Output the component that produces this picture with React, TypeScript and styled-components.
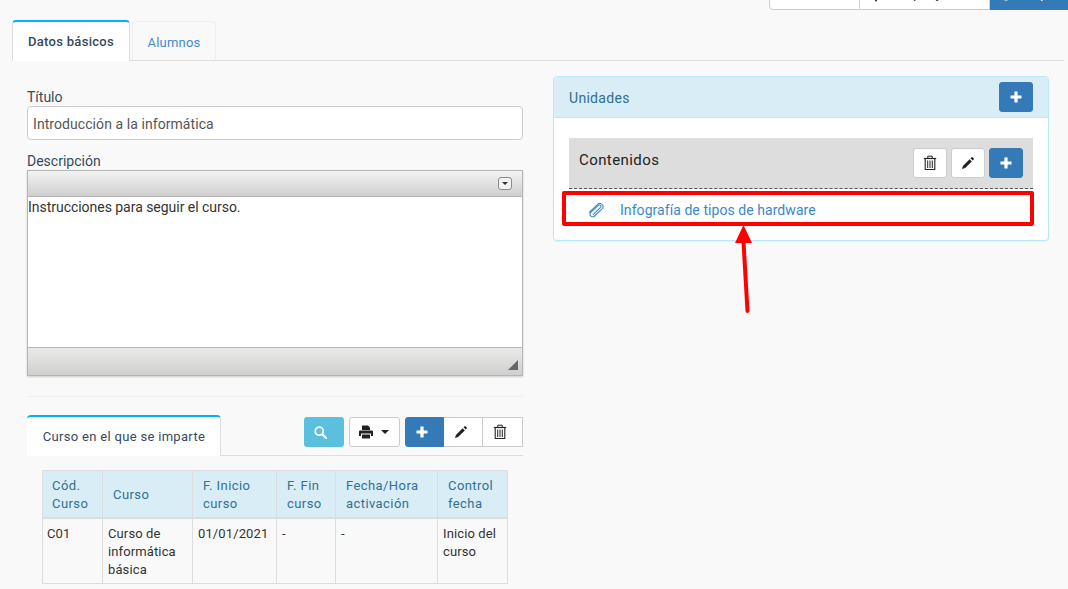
import React from "react";
import styled, { createGlobalStyle } from "styled-components";

const Global = createGlobalStyle`
  html, body { margin: 0; padding: 0; background: #f9f9f9; overflow: hidden; }
  body { font-family: Roboto, "Liberation Sans", sans-serif; font-size: 14px; line-height: 20px; color: #333; }
  * { box-sizing: border-box; }
`;

const Page = styled.div`
  position: relative;
  width: 1068px;
  height: 589px;
  overflow: hidden;
  background: #f9f9f9;
`;

const TopBar = styled.div`
  height: 10px;
  display: flex;
  justify-content: flex-end;
  align-items: flex-end;
  overflow: hidden;
`;

const TopGroup = styled.div`
  display: flex;
  width: 299px;
  height: 34px;
  flex: none;
`;

const TopButton = styled.div<{ $w: number; $primary?: boolean; $first?: boolean; $pad: number; $gap: number }>`
  width: ${(p) => p.$w}px;
  height: 34px;
  flex: none;
  display: flex;
  align-items: center;
  padding-left: ${(p) => p.$pad}px;
  gap: ${(p) => p.$gap}px;
  color: ${(p) => (p.$primary ? "#fff" : "#333")};
  background: ${(p) => (p.$primary ? "#337ab7" : "#fff")};
  border: 1px solid ${(p) => (p.$primary ? "#337ab7" : "#ccc")};
  border-left-width: ${(p) => (p.$first ? 1 : 0)}px;
  border-bottom-left-radius: ${(p) => (p.$first ? 4 : 0)}px;
  white-space: nowrap;
`;

const TopIcon = styled.span`
  display: flex;
  margin-top: 4px;
`;

const Tabs = styled.div`
  margin: 10px 4px 0 12px;
  height: 41px;
  display: flex;
  align-items: flex-end;
  gap: 2px;
  border-bottom: 1px solid #ddd;
`;

const ActiveTab = styled.div<{ $w: number }>`
  width: ${(p) => p.$w}px;
  height: 41px;
  margin-bottom: -1px;
  background: #fff;
  border: 1px solid #ddd;
  border-top: 2px solid #00b0ff;
  border-bottom: 0;
  border-radius: 4px 4px 0 0;
  display: flex;
  align-items: center;
  justify-content: center;
  font-size: 13px;
  font-weight: 500;
  letter-spacing: 0.3px;
  color: #34495e;
  white-space: nowrap;
`;

const InactiveTab = styled.div`
  width: 84px;
  height: 39px;
  border: 1px solid #eee;
  border-bottom: 0;
  border-radius: 4px 4px 0 0;
  display: flex;
  align-items: center;
  justify-content: center;
  padding-top: 4px;
  font-size: 13px;
  letter-spacing: 0.2px;
  color: #428bca;
`;

const Columns = styled.div`
  display: grid;
  grid-template-columns: 496px 496px;
  column-gap: 30px;
  padding: 15px 19px 0 27px;
`;

const LeftColumn = styled.div`
  padding-top: 11px;
`;

const FieldLabel = styled.div`
  height: 19px;
  color: #34495e;
  font-size: 14px;
  line-height: 20px;
`;

const TextField = styled.div`
  height: 34px;
  margin-bottom: 11px;
  padding: 2px 5px 0;
  background: #fff;
  border: 1px solid #ccc;
  border-radius: 4px;
  display: flex;
  align-items: center;
  color: #555;
  letter-spacing: 0.07px;
`;

const Editor = styled.div`
  height: 206px;
  display: flex;
  flex-direction: column;
  border: 1px solid #b5b5b5;
  box-shadow: 0 1px 2px rgba(0, 0, 0, 0.18);
  background: #fff;
`;

const EditorToolbar = styled.div`
  height: 26px;
  flex: none;
  display: flex;
  align-items: center;
  justify-content: flex-end;
  padding-right: 10px;
  background: linear-gradient(#f3f3f3, #cfd0ce);
  border-bottom: 1px solid #b5b5b5;
`;

const EditorMenu = styled.div`
  width: 14px;
  height: 13px;
  border: 1px solid #8a8a8a;
  border-radius: 3px;
  background: #f2f2f2;
  display: flex;
  align-items: center;
  justify-content: center;
  &::after {
    content: "";
    border: 3px solid transparent;
    border-top: 3px solid #333;
    border-bottom: 0;
  }
`;

const EditorBody = styled.div`
  flex: 1;
  color: #333;
  line-height: 20px;
  letter-spacing: -0.03px;
`;

const EditorFooter = styled.div`
  height: 28px;
  flex: none;
  display: flex;
  align-items: flex-end;
  justify-content: flex-end;
  padding: 0 4px 5px 0;
  background: linear-gradient(#e9e9e9, #cfd0ce);
  border-top: 1px solid #b5b5b5;
`;

const Grip = styled.div`
  width: 0;
  height: 0;
  border-left: 10px solid transparent;
  border-bottom: 10px solid #666;
`;

const Divider = styled.div`
  height: 1px;
  background: #eee;
  margin-top: 20px;
`;

const SubHeader = styled.div`
  margin-top: 18px;
  height: 41px;
  display: flex;
  justify-content: space-between;
  border-bottom: 1px solid #ddd;
`;

const SubTab = styled.div`
  width: 194px;
  height: 41px;
  background: #fff;
  border-top: 2px solid #00b0ff;
  border-right: 1px solid #ddd;
  border-radius: 4px 4px 0 0;
  display: flex;
  align-items: center;
  justify-content: center;
  padding-left: 1px;
  font-size: 13px;
  letter-spacing: 0.31px;
  color: #34495e;
  white-space: nowrap;
`;

const SubActions = styled.div`
  display: flex;
  gap: 5px;
  padding-top: 2px;
`;

const SearchButton = styled.div`
  width: 40px;
  height: 30px;
  padding-right: 8px;
  border-radius: 3px;
  background: #5bc0de;
  color: #fff;
  display: flex;
  align-items: center;
  justify-content: center;
`;

const PrintButton = styled.div`
  width: 51px;
  height: 30px;
  padding-right: 2px;
  border: 1px solid #ccc;
  border-radius: 3px;
  background: #fff;
  color: #222;
  display: flex;
  align-items: center;
  justify-content: center;
  gap: 8px;
`;

const Caret = styled.span`
  border: 4px solid transparent;
  border-top: 4px solid #222;
  border-bottom: 0;
`;

const ActionGroup = styled.div`
  display: flex;
  height: 30px;
`;

const GroupButton = styled.div<{ $primary?: boolean; $w: number }>`
  width: ${(p) => p.$w}px;
  height: 30px;
  padding-right: ${(p) => (p.$primary ? 6 : 5)}px;
  display: flex;
  align-items: center;
  justify-content: center;
  background: ${(p) => (p.$primary ? "#337ab7" : "#fff")};
  color: ${(p) => (p.$primary ? "#fff" : "#222")};
  border: 1px solid ${(p) => (p.$primary ? "#337ab7" : "#ccc")};
  border-left-width: ${(p) => (p.$primary ? 1 : 0)}px;
  border-radius: ${(p) => (p.$primary ? "3px 0 0 3px" : "0")};
`;

const TableWrap = styled.div`
  padding: 14px 15px 0;
`;

const DataTable = styled.table`
  width: 465px;
  table-layout: fixed;
  border-collapse: collapse;
  font-size: 13px;
  line-height: 18px;
`;

const HeadCell = styled.th`
  background: #d9edf7;
  color: #31708f;
  font-weight: 400;
  letter-spacing: 0.42px;
  text-align: left;
  padding: 6px 10px 4px;
  border: 1px solid #ddd;
  border-bottom-width: 2px;
  &:first-child {
    padding-left: 9px;
  }
`;

const BodyCell = styled.td`
  padding: 6px 5px 4px;
  vertical-align: top;
  letter-spacing: 0.12px;
  color: #333;
  border: 1px solid #ddd;
  &:first-child {
    padding-left: 4px;
  }
`;

const Panel = styled.div`
  height: 165px;
  background: #fff;
  border: 1px solid #bce8f1;
  border-radius: 4px;
  box-shadow: 0 1px 1px rgba(0, 0, 0, 0.05);
`;

const PanelHeader = styled.div`
  height: 41px;
  background: #d9edf7;
  border-bottom: 1px solid #bce8f1;
  border-radius: 3px 3px 0 0;
  padding: 0 15px;
  display: flex;
  justify-content: space-between;
  align-items: center;
  color: #31708f;
  font-size: 14px;
  letter-spacing: 0.3px;
`;

const PanelTitle = styled.span`
  margin-top: 2px;
`;

const PanelBody = styled.div`
  padding: 20px 15px 0;
`;

const UnitBar = styled.div`
  height: 51px;
  padding: 10px;
  background: #ddd;
  border-bottom: 1px dashed #555;
  display: flex;
  justify-content: space-between;
`;

const UnitTitle = styled.div`
  font-size: 15px;
  letter-spacing: 0.42px;
  line-height: 24px;
  color: #222;
`;

const UnitActions = styled.div`
  display: flex;
  gap: 4px;
`;

const IconButton = styled.div<{ $primary?: boolean }>`
  width: 34px;
  height: 30px;
  border-radius: 3px;
  display: flex;
  align-items: center;
  justify-content: center;
  background: ${(p) => (p.$primary ? "#337ab7" : "#fff")};
  color: ${(p) => (p.$primary ? "#fff" : "#222")};
  border: 1px solid ${(p) => (p.$primary ? "#337ab7" : "#ccc")};
`;

const UnitItem = styled.div`
  height: 36px;
  display: flex;
  align-items: center;
  gap: 15px;
  padding: 6px 0 0 19px;
  font-size: 14px;
  letter-spacing: 0.06px;
  color: #3a87cb;
`;

const ClipSlot = styled.span`
  display: flex;
  margin-top: -1px;
`;

const Highlight = styled.div`
  position: absolute;
  left: 562px;
  top: 191px;
  width: 472px;
  height: 35px;
  border: 4px solid #ff0000;
  border-radius: 2px;
  pointer-events: none;
`;

const ArrowMark = styled.svg`
  position: absolute;
  left: 730px;
  top: 222px;
`;

const PlusIcon = () => (
  <svg width="12" height="12" viewBox="0 0 12 12" fill="currentColor">
    <path d="M4.4 0.5h3.2v3.9h3.9v3.2H7.6v3.9H4.4V7.6H0.5V4.4h3.9z" />
  </svg>
);

const TrashIcon = () => (
  <svg width="14" height="16" viewBox="0 0 14 16" fill="none" stroke="currentColor">
    <path d="M0.8 3.5h12.4" strokeWidth="1.2" />
    <path d="M4.8 3V1.2h4.4V3" strokeWidth="1" />
    <path d="M2.2 4v10.5h9.6V4" strokeWidth="1.1" />
    <path d="M4.7 5.5v7.5M7 5.5v7.5M9.3 5.5v7.5" strokeWidth="1" />
  </svg>
);

const PencilIcon = () => (
  <svg width="14" height="14" viewBox="0 0 14 14" fill="currentColor">
    <path d="M1 13l.9-3.1L8.6 3.2l2.2 2.2L4.1 12.1z" />
    <path d="M9.5 2.3l.9-.9a1 1 0 0 1 1.4 0l.8.8a1 1 0 0 1 0 1.4l-.9.9z" />
  </svg>
);

const PrinterIcon = () => (
  <svg width="14" height="14" viewBox="0 0 14 14" fill="currentColor">
    <path d="M3 0.5h6l2 2V5H3z" />
    <path d="M1 5.5h12a1 1 0 0 1 1 1V11h-2V8.5H2V11H0V6.5a1 1 0 0 1 1-1z" />
    <path d="M3 9.5h8v4H3z" />
  </svg>
);

const MarkerIcon = () => (
  <svg width="14" height="14" viewBox="0 0 14 14" fill="currentColor">
    <path d="M7 0a4.5 4.5 0 0 0-4.5 4.5C2.5 8 7 14 7 14s4.5-6 4.5-9.5A4.5 4.5 0 0 0 7 0z" />
  </svg>
);

const SearchIcon = () => (
  <svg width="13" height="13" viewBox="0 0 13 13" fill="none" stroke="currentColor">
    <circle cx="5.2" cy="5.2" r="4" strokeWidth="1.7" />
    <path d="M8.4 8.4l3.6 3.6" strokeWidth="2.4" strokeLinecap="round" />
  </svg>
);

const ClipIcon = () => (
  <svg width="17" height="16" viewBox="0 0 17 16" fill="none" stroke="#428bca" strokeWidth="1.1" strokeLinecap="round">
    <path d="M1.5 10.2L9.6 2.4a3.2 3.2 0 0 1 4.7 4.3L6.6 14a2.6 2.6 0 0 1-3.8-3.6L10.4 3.4a1.5 1.5 0 0 1 2.2 2L5.2 12.6" />
  </svg>
);

const headers = ["Cód. Curso", "Curso", "F. Inicio curso", "F. Fin curso", "Fecha/Hora activación", "Control fecha"];
const widths = [60, 90, 84, 59, 102, 70];
const cells = ["C01", "Curso de informática básica", "01/01/2021", "-", "-", "Inicio del curso"];

export default function App() {
  return (
    <Page>
      <Global />
      <TopBar>
        <TopGroup>
          <TopButton $w={91} $first $pad={20} $gap={0}>Volver</TopButton>
          <TopButton $w={130} $pad={9} $gap={13}>
            <TopIcon><MarkerIcon /></TopIcon>Copia y cerrar
          </TopButton>
          <TopButton $w={78} $primary $pad={10} $gap={13}>
            <TopIcon><PlusIcon /></TopIcon>Exportar
          </TopButton>
        </TopGroup>
      </TopBar>
      <Tabs>
        <ActiveTab $w={118}>Datos básicos</ActiveTab>
        <InactiveTab>Alumnos</InactiveTab>
      </Tabs>
      <Columns>
        <LeftColumn>
          <FieldLabel>Título</FieldLabel>
          <TextField>Introducción a la informática</TextField>
          <FieldLabel>Descripción</FieldLabel>
          <Editor>
            <EditorToolbar><EditorMenu /></EditorToolbar>
            <EditorBody>Instrucciones para seguir el curso.</EditorBody>
            <EditorFooter><Grip /></EditorFooter>
          </Editor>
          <Divider />
          <SubHeader>
            <SubTab>Curso en el que se imparte</SubTab>
            <SubActions>
              <SearchButton><SearchIcon /></SearchButton>
              <PrintButton><PrinterIcon /><Caret /></PrintButton>
              <ActionGroup>
                <GroupButton $primary $w={39}><PlusIcon /></GroupButton>
                <GroupButton $w={39}><PencilIcon /></GroupButton>
                <GroupButton $w={40}><TrashIcon /></GroupButton>
              </ActionGroup>
            </SubActions>
          </SubHeader>
          <TableWrap>
            <DataTable>
              <colgroup>
                {widths.map((w) => <col key={w} width={w} />)}
              </colgroup>
              <thead>
                <tr>{headers.map((h) => <HeadCell key={h}>{h}</HeadCell>)}</tr>
              </thead>
              <tbody>
                <tr>{cells.map((c, i) => <BodyCell key={i}>{c}</BodyCell>)}</tr>
              </tbody>
            </DataTable>
          </TableWrap>
        </LeftColumn>
        <div>
          <Panel>
            <PanelHeader>
              <PanelTitle>Unidades</PanelTitle>
              <IconButton $primary><PlusIcon /></IconButton>
            </PanelHeader>
            <PanelBody>
              <UnitBar>
                <UnitTitle>Contenidos</UnitTitle>
                <UnitActions>
                  <IconButton><TrashIcon /></IconButton>
                  <IconButton><PencilIcon /></IconButton>
                  <IconButton $primary><PlusIcon /></IconButton>
                </UnitActions>
              </UnitBar>
              <UnitItem><ClipSlot><ClipIcon /></ClipSlot>Infografía de tipos de hardware</UnitItem>
            </PanelBody>
          </Panel>
        </div>
      </Columns>
      <Highlight />
      <ArrowMark width="30" height="94" viewBox="0 0 30 94" fill="#ff0000">
        <path d="M13.5 3L22 21H5z" />
        <path d="M13.5 20L17.5 89" stroke="#ff0000" strokeWidth="4" strokeLinecap="round" />
      </ArrowMark>
    </Page>
  );
}
